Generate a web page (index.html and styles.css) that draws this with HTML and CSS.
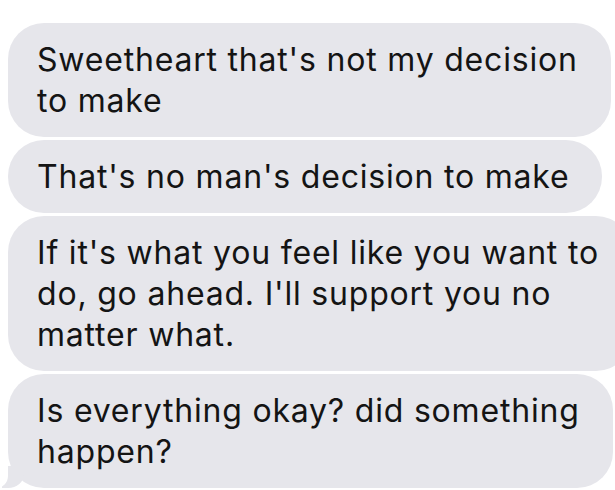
FILE: index.html
```html
<!DOCTYPE html>
<html lang="en">

<head>
    <meta charset="UTF-8">
    <meta name="viewport" content="width=device-width, initial-scale=1.0">
    <title>Messages</title>
    <link rel="stylesheet" href="styles.css">
</head>

<body>
    <div class="thread">
        <div class="bubble">Sweetheart that's not my decision<br>to make</div>
        <div class="bubble">That's no man's decision to make</div>
        <div class="bubble">If it's what you feel like you want to<br>do, go ahead. I'll support you no<br>matter what.</div>
        <div class="bubble tail">Is everything okay? did something<br>happen?</div>
    </div>
</body>

</html>
```

FILE: styles.css
```css
body {
    margin: 0;
    background-color: #fff;
    overflow: hidden;
    font-family: Inter, "Noto Sans", sans-serif;
}

.thread {
    display: flex;
    flex-direction: column;
    align-items: flex-start;
    gap: 3px;
    padding: 23px 0 0 8px;
}

.bubble {
    position: relative;
    background-color: #e6e6eb;
    color: #141414;
    font-size: 32px;
    letter-spacing: 0.8px;
    line-height: 41px;
    padding: 16px 33px 16px 29px;
    border-radius: 36px;
    white-space: nowrap;
}

.tail::before {
    content: "";
    position: absolute;
    left: -6px;
    bottom: 0;
    width: 22px;
    height: 22px;
    background-color: #e6e6eb;
    border-bottom-right-radius: 16px 14px;
}

.tail::after {
    content: "";
    position: absolute;
    left: -18px;
    bottom: 0;
    width: 18px;
    height: 22px;
    background-color: #fff;
    border-bottom-right-radius: 12px;
}
```
